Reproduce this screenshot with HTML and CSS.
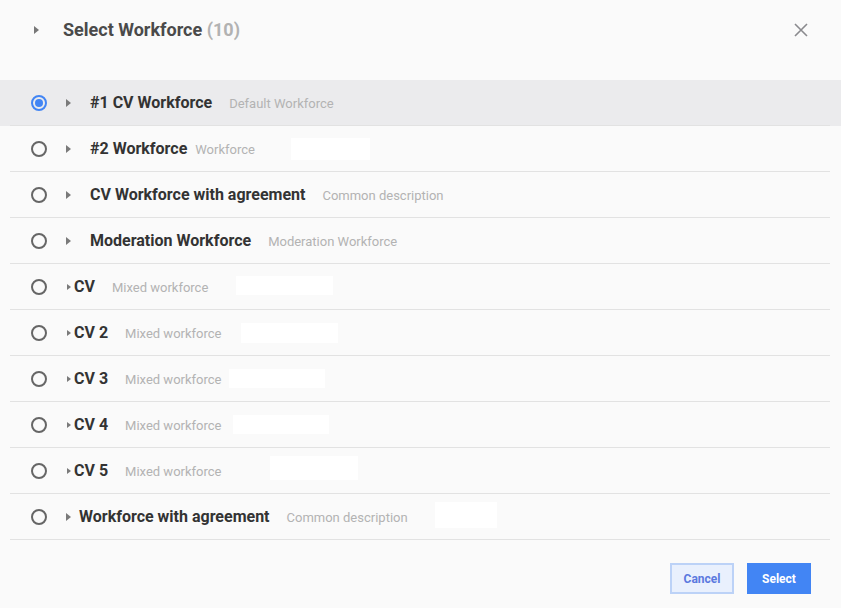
FILE: index.html
```html
<!DOCTYPE html>
<html>
<head>
<meta charset="utf-8">
<title>Select Workforce</title>
<link rel="stylesheet" href="styles.css">
</head>
<body>
<div class="dialog">
    <div class="dialog-head">
        <span class="caret caret--head"></span>
        <h1 class="title">Select Workforce <span class="count">(10)</span></h1>
        <svg class="close" width="14" height="14" viewBox="0 0 14 14"><path d="M1 1L13 13M13 1L1 13" stroke="#8a8a8e" stroke-width="1.6" fill="none"/></svg>
    </div>

    <ul class="list">
        <li class="row is-selected">
            <div class="row-in">
                <span class="radio"></span><span class="caret"></span>
                <span class="name">#1 CV Workforce</span><span class="desc">Default Workforce</span>
            </div>
        </li>
        <li class="row">
            <div class="row-in">
                <span class="radio"></span><span class="caret"></span>
                <span class="name">#2 Workforce</span><span class="desc desc--near">Workforce</span>
                <span class="blank blank--r2"></span>
            </div>
        </li>
        <li class="row">
            <div class="row-in">
                <span class="radio"></span><span class="caret"></span>
                <span class="name">CV Workforce with agreement</span><span class="desc">Common description</span>
            </div>
        </li>
        <li class="row">
            <div class="row-in">
                <span class="radio"></span><span class="caret"></span>
                <span class="name">Moderation Workforce</span><span class="desc">Moderation Workforce</span>
            </div>
        </li>
        <li class="row row--flat">
            <div class="row-in">
                <span class="radio"></span><span class="caret caret--sm"></span>
                <span class="name">CV</span><span class="desc">Mixed workforce</span>
                <span class="blank blank--r5"></span>
            </div>
        </li>
        <li class="row row--flat">
            <div class="row-in">
                <span class="radio"></span><span class="caret caret--sm"></span>
                <span class="name">CV 2</span><span class="desc">Mixed workforce</span>
                <span class="blank blank--r6"></span>
            </div>
        </li>
        <li class="row row--flat">
            <div class="row-in">
                <span class="radio"></span><span class="caret caret--sm"></span>
                <span class="name">CV 3</span><span class="desc">Mixed workforce</span>
                <span class="blank blank--r7"></span>
            </div>
        </li>
        <li class="row row--flat">
            <div class="row-in">
                <span class="radio"></span><span class="caret caret--sm"></span>
                <span class="name">CV 4</span><span class="desc">Mixed workforce</span>
                <span class="blank blank--r8"></span>
            </div>
        </li>
        <li class="row row--flat">
            <div class="row-in">
                <span class="radio"></span><span class="caret caret--sm"></span>
                <span class="name">CV 5</span><span class="desc">Mixed workforce</span>
                <span class="blank blank--r9"></span>
            </div>
        </li>
        <li class="row row--mid">
            <div class="row-in">
                <span class="radio"></span><span class="caret"></span>
                <span class="name">Workforce with agreement</span><span class="desc">Common description</span>
                <span class="blank blank--r10"></span>
            </div>
        </li>
    </ul>

    <div class="dialog-foot">
        <button class="btn btn--cancel">Cancel</button>
        <button class="btn btn--primary">Select</button>
    </div>
</div>
</body>
</html>
```

FILE: styles.css
```css
*{padding:0;margin:0;box-sizing:border-box;}
li{list-style:none;}
html,body{
    height:100%;
    background:#fafafa;
    font-family:Roboto,"Liberation Sans",Arial,sans-serif;
}
.dialog{
    width:841px;
    height:608px;
    background:#fafafa;
}
.dialog-head{
    height:80px;
    display:flex;
    align-items:center;
    padding:0 32px 22px 34px;
}
.title{
    font-size:18px;
    font-weight:700;
    color:#4a4a4a;
    margin-left:24px;
    flex:1;
}
.count{color:#b2b2b2;}
.close{margin-right:1px;margin-top:2px;}

/* little right-pointing triangles */
.caret{
    width:0;
    height:0;
    border-top:4px solid transparent;
    border-bottom:4px solid transparent;
    border-left:5px solid #7a7a7a;
    flex:none;
}
.caret--head{border-left-color:#777;margin-top:2px;}
.caret--sm{
    border-top-width:3px;
    border-bottom-width:3px;
    border-left-width:4px;
}

.row{height:46px;}
.row.is-selected{background:#ebebed;}
.row-in{
    height:46px;
    margin:0 11px 0 10px;
    border-bottom:1px solid #e2e2e2;
    display:flex;
    align-items:center;
    padding-left:21px;
}
.radio{
    width:16px;
    height:16px;
    border:2px solid #666;
    border-radius:50%;
    flex:none;
    margin-right:19px;
    position:relative;
}
.is-selected .radio{border-color:#4285f4;}
.is-selected .radio:after{
    content:"";
    position:absolute;
    left:2px;
    top:2px;
    width:8px;
    height:8px;
    border-radius:50%;
    background:#4285f4;
}
.name{
    font-size:16px;
    font-weight:700;
    color:#333;
    margin-left:19px;
    margin-top:-1px;
    white-space:nowrap;
}
.row--flat .radio{margin-right:20px;}
.row--flat .name{margin-left:3px;}
.row--mid .name{margin-left:8px;}
.desc{
    font-size:13px;
    color:#b3b3b3;
    margin-left:17px;
    margin-top:2px;
    white-space:nowrap;
}
.desc--near{margin-left:8px;}

/* empty white slots after some descriptions */
.blank{
    background:#fff;
    flex:none;
}
.blank--r2{width:79px;height:22px;margin-left:36px;}
.blank--r5{width:97px;height:19px;margin-left:28px;margin-top:-3px;}
.blank--r6{width:97px;height:20px;margin-left:20px;}
.blank--r7{width:96px;height:19px;margin-left:8px;}
.blank--r8{width:96px;height:19px;margin-left:12px;}
.blank--r9{width:88px;height:24px;margin-left:49px;margin-top:-5px;}
.blank--r10{width:62px;height:26px;margin-left:27px;margin-top:-4px;}

.dialog-foot{
    display:flex;
    justify-content:flex-end;
    gap:13px;
    padding:23px 30px 0 0;
}
.btn{
    height:31px;
    width:64px;
    font-family:inherit;
    font-size:12px;
    font-weight:700;
    border:none;
    cursor:pointer;
}
.btn--cancel{
    background:#e9f0fd;
    color:#5b79df;
    border:2px solid #bcd2f7;
}
.btn--primary{
    background:#4285f4;
    color:#fff;
}
```
